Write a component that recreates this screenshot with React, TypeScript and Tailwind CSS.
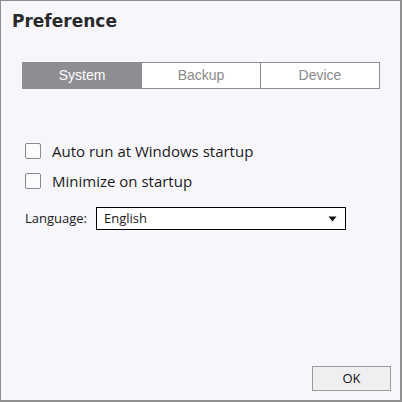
import React from 'react';

export default function App() {
  const tabs = ['System', 'Backup', 'Device'];
  return (
    <div className="w-[402px] h-[402px] bg-[#f7f7fb] border-t border-l border-r-2 border-b-2 border-[#8f8f8f] flex flex-col font-['Liberation_Sans',Arial,sans-serif]">
      {/* Title */}
      <h1 className="pl-[11px] pt-[9px] text-[17px] leading-[22px] font-bold text-[#2a2a2a] font-['DejaVu_Sans',sans-serif]">Preference</h1>

      {/* Tabs */}
      <div className="mt-[30px] ml-[21px] flex w-[358px] h-[27px]">
        {tabs.map((t, i) => (
          <div
            key={t}
            className={
              i === 0
                ? 'w-[120px] flex items-center justify-center bg-[#8e8e92] text-white text-[14px]'
                : 'w-[120px] flex items-center justify-center bg-white border border-[#8e8e92] text-[#8a8a8a] text-[14px] -ml-px'
            }
          >
            {t}
          </div>
        ))}
      </div>

      {/* Options */}
      <div className="mt-[54px] ml-[24px] flex flex-col gap-[14px] text-[#1a1a1a] font-['Open_Sans',sans-serif]">
        <label className="flex items-center gap-[11px] h-[16px]">
          <span className="w-[16px] h-[16px] rounded-[2px] border border-[#8a8a8a] bg-[#fbfbfd]" />
          <span className="text-[15px]">Auto run at Windows startup</span>
        </label>
        <label className="flex items-center gap-[11px] h-[16px]">
          <span className="w-[16px] h-[16px] rounded-[2px] border border-[#8a8a8a] bg-[#fbfbfd]" />
          <span className="text-[15px]">Minimize on startup</span>
        </label>
      </div>

      <div className="mt-[18px] ml-[24px] flex items-center gap-[9px] text-[13px] text-[#1a1a1a] font-['Open_Sans',sans-serif]">
        <span>Language:</span>
        <div className="w-[250px] h-[23px] bg-white border border-black flex items-center justify-between pl-[7px] pr-[8px]">
          <span>English</span>
          <svg width="9" height="6" viewBox="0 0 9 6">
            <path d="M0.5 0.5 L8.5 0.5 L4.5 5.5 Z" fill="#111" />
          </svg>
        </div>
      </div>

      {/* Footer */}
      <div className="mt-auto mb-[9px] mr-[9px] flex justify-end">
        <button className="w-[79px] h-[25px] bg-[#efeff1] border border-[#9a9a9a] text-[13px] text-[#111] font-['Open_Sans',sans-serif]">
          OK
        </button>
      </div>
    </div>
  );
}
